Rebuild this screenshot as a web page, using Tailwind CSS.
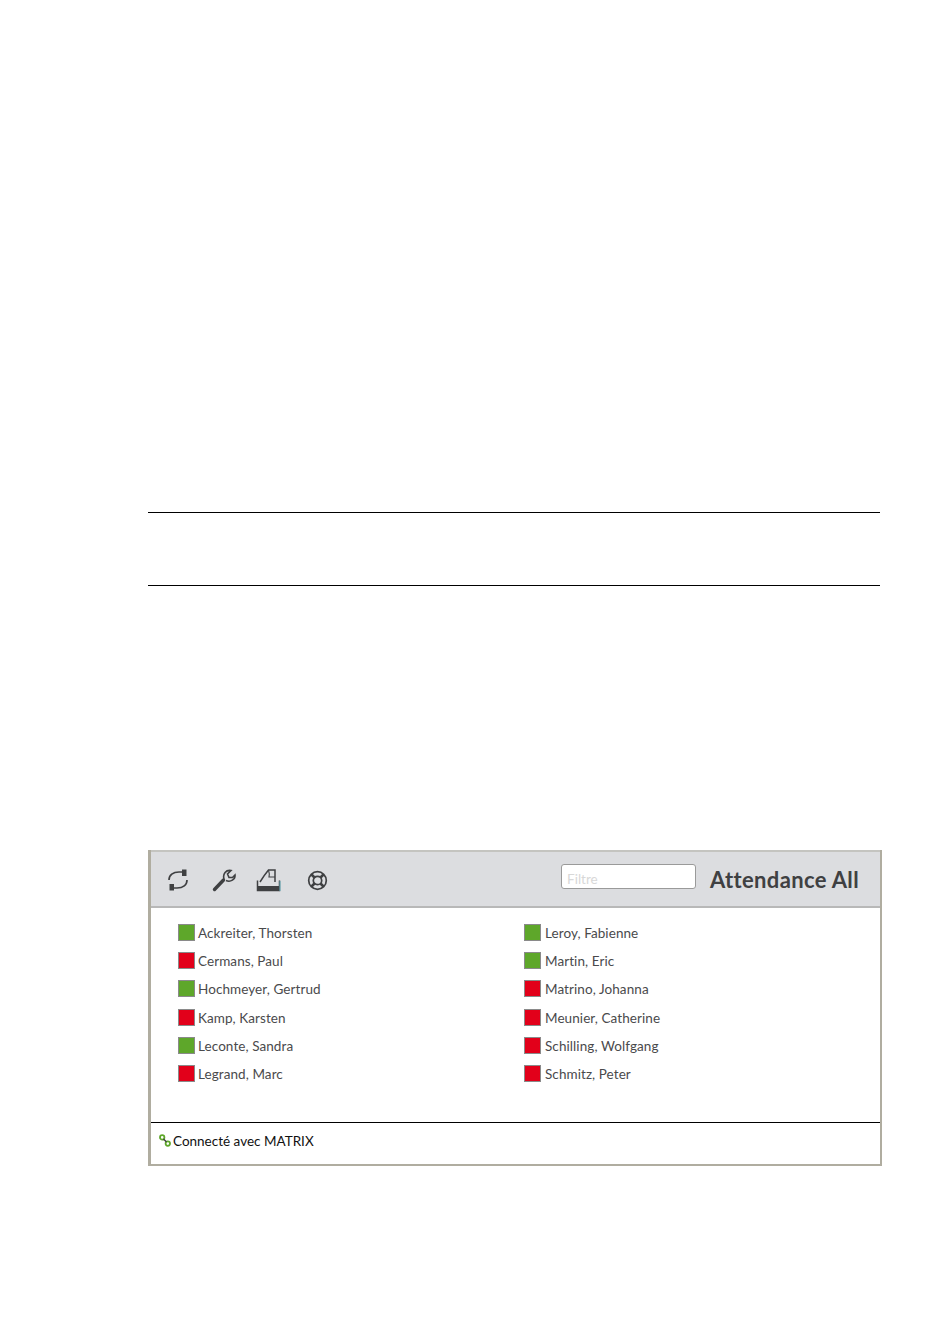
<!DOCTYPE html>
<html lang="en">
<head>
  <meta charset="UTF-8">
  <title>Attendance All</title>
  <script src="https://cdn.jsdelivr.net/npm/@tailwindcss/browser@4"></script>
</head>
<body class="bg-white font-['Lato',sans-serif]">
  <div class="w-[950px] h-[1344px] pt-[512px] pl-[148px]">
    <!-- Empty table rows -->
    <div class="w-[732px] h-[74px] border-y border-black"></div>

    <!-- Panel -->
    <div class="mt-[264px] w-[734px] h-[316px] border-2 border-t-0 border-[#b0ada0] border-l-[3px] flex flex-col">
      <div class="h-[58px] shrink-0 bg-[#dcdde0] border-t-2 border-t-[#c4c4c0] border-b-2 border-b-[#b8b8b8] flex items-center pl-[16px] pt-[2px]">
        <div class="flex items-center">
          <svg class="w-[22px] h-[24px]" viewBox="0 0 22 24" fill="none" stroke="#3f4042" stroke-width="1.7">
            <path d="M2 12 C2 7 6 4 12 4 L16 4" />
            <path d="M20 12 C20 17 16 20 10 20 L6 20" />
            <path d="M15 1.5 H19.5 V8 H15 Z" fill="#3f4042" stroke="none" />
            <path d="M2.5 16 H7 V22.5 H2.5 Z" fill="#3f4042" stroke="none" />
          </svg>
          <svg class="w-[24px] h-[24px] ml-[23px]" viewBox="0 0 24 24" fill="none" stroke="#3f4042">
            <path d="M2.5 21.5 L11.5 12" stroke-width="3.4" stroke-linecap="round" />
            <path d="M12 11 C10.5 6 14 1.5 19 2.5 L15.5 6 L17 9.5 L20.5 9.5 L23 7 C23.5 11.5 18.5 14.5 14 12.5" stroke-width="1.6" />
          </svg>
          <svg class="w-[25px] h-[24px] ml-[20px]" viewBox="0 0 25 24" fill="none" stroke="#3f4042" stroke-width="1.5">
            <path d="M4 14 C7 9 10 5 12.5 2 H19 V14" />
            <path d="M12.5 2 C13.5 5 13.5 7 13 9 L19 9" stroke-width="1.1" />
            <path d="M1.5 12.5 V22.5 H23.5 V12.5" />
            <rect x="1" y="18" width="23" height="5" fill="#3f4042" stroke="none" />
            <path d="M24 13 V23" stroke="#6fb7c4" stroke-width="1" />
          </svg>
          <svg class="w-[21px] h-[21px] ml-[26px]" viewBox="0 0 21 21" fill="none" stroke="#3f4042">
            <circle cx="10.5" cy="10.5" r="8.8" stroke-width="1.7" />
            <circle cx="10.5" cy="10.5" r="4.2" stroke-width="1.7" />
            <path d="M4.5 4.5 L7.5 7.5 M16.5 4.5 L13.5 7.5 M4.5 16.5 L7.5 13.5 M16.5 16.5 L13.5 13.5" stroke-width="2.6" />
          </svg>
        </div>
        <div class="ml-auto mb-[8px] w-[135px] h-[25px] bg-white border border-[#9a9a9a] rounded-[3px] pl-[5px] pt-[5px] text-[13.5px] leading-[18px] text-[#d8d8d8]">Filtre</div>
        <div class="ml-[14px] mr-[21px] text-[22px] leading-[28px] font-bold text-[#3f4042] tracking-[0.35px]">Attendance All</div>
      </div>

      <div class="h-[215px] shrink-0 bg-white border-b border-black pt-[16px] pl-[27px] grid grid-cols-[346px_1fr] auto-rows-[28.2px] text-[13.5px] tracking-[0.08px] text-[#4a4a4c]">
        <div class="flex items-start"><span class="w-[17px] h-[17px] bg-[#5ea72a] border border-[#8a8a8a]"></span><span class="ml-[3px] leading-[19px]">Ackreiter, Thorsten</span></div>
        <div class="flex items-start"><span class="w-[17px] h-[17px] bg-[#5ea72a] border border-[#8a8a8a]"></span><span class="ml-[4px] leading-[19px]">Leroy, Fabienne</span></div>
        <div class="flex items-start"><span class="w-[17px] h-[17px] bg-[#e2001a] border border-[#8a8a8a]"></span><span class="ml-[3px] leading-[19px]">Cermans, Paul</span></div>
        <div class="flex items-start"><span class="w-[17px] h-[17px] bg-[#5ea72a] border border-[#8a8a8a]"></span><span class="ml-[4px] leading-[19px]">Martin, Eric</span></div>
        <div class="flex items-start"><span class="w-[17px] h-[17px] bg-[#5ea72a] border border-[#8a8a8a]"></span><span class="ml-[3px] leading-[19px]">Hochmeyer, Gertrud</span></div>
        <div class="flex items-start"><span class="w-[17px] h-[17px] bg-[#e2001a] border border-[#8a8a8a]"></span><span class="ml-[4px] leading-[19px]">Matrino, Johanna</span></div>
        <div class="flex items-start"><span class="w-[17px] h-[17px] bg-[#e2001a] border border-[#8a8a8a]"></span><span class="ml-[3px] leading-[19px]">Kamp, Karsten</span></div>
        <div class="flex items-start"><span class="w-[17px] h-[17px] bg-[#e2001a] border border-[#8a8a8a]"></span><span class="ml-[4px] leading-[19px]">Meunier, Catherine</span></div>
        <div class="flex items-start"><span class="w-[17px] h-[17px] bg-[#5ea72a] border border-[#8a8a8a]"></span><span class="ml-[3px] leading-[19px]">Leconte, Sandra</span></div>
        <div class="flex items-start"><span class="w-[17px] h-[17px] bg-[#e2001a] border border-[#8a8a8a]"></span><span class="ml-[4px] leading-[19px]">Schilling, Wolfgang</span></div>
        <div class="flex items-start"><span class="w-[17px] h-[17px] bg-[#e2001a] border border-[#8a8a8a]"></span><span class="ml-[3px] leading-[19px]">Legrand, Marc</span></div>
        <div class="flex items-start"><span class="w-[17px] h-[17px] bg-[#e2001a] border border-[#8a8a8a]"></span><span class="ml-[4px] leading-[19px]">Schmitz, Peter</span></div>
      </div>

      <div class="flex-1 bg-white flex items-start pl-[8px] pt-[9px] text-[13.5px] leading-[19px] text-[#111]">
        <svg class="w-[12px] h-[13px] mt-[2px]" viewBox="0 0 12 13" fill="none" stroke="#5ea72a" stroke-width="1.8">
          <circle cx="3.2" cy="3.4" r="2.2" />
          <circle cx="8.8" cy="9.6" r="2.2" />
          <path d="M4.5 5 L7.5 8" stroke="#3f4042" stroke-width="1.4" />
        </svg>
        <span class="ml-[2px]">Connecté avec MATRIX</span>
      </div>
    </div>
  </div>
</body>
</html>
